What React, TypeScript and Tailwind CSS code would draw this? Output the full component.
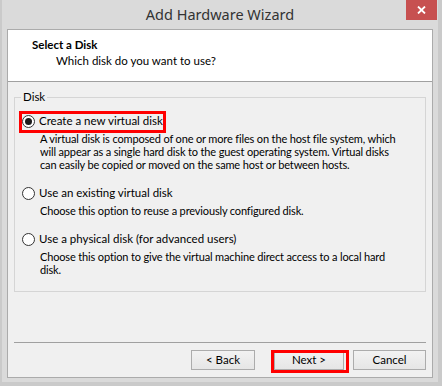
import React from "react";

const font = { fontFamily: 'Lato, "Noto Sans", Arial, sans-serif' };
const titleFont = { fontFamily: '"Noto Sans", Arial, sans-serif' };

function Radio({ checked }: { checked?: boolean }) {
  return (
    <span className="flex h-[13px] w-[13px] shrink-0 items-center justify-center rounded-full border border-[#333333] bg-white">
      {checked && <span className="h-[7px] w-[7px] rounded-full bg-[#1b1b1b]" />}
    </span>
  );
}

function Btn({ children }: { children: React.ReactNode }) {
  return (
    <div className="flex h-[20px] items-center justify-center border border-[#acacac] bg-gradient-to-b from-[#f2f2f2] to-[#e6e6e6] text-[11.5px] text-[#000]">
      {children}
    </div>
  );
}

function Option({ checked, label, lines }: { checked?: boolean; label: string; lines: string[] }) {
  return (
    <div>
      <div className="flex items-center gap-[4px] text-[11.5px] leading-[14px] text-black">
        <Radio checked={checked} />
        <span>{label}</span>
      </div>
      <div className="whitespace-nowrap pl-[18px] pt-[4px] text-[11px] leading-[13px] tracking-[-0.15px] text-black">
        {lines.map((l, i) => (
          <div key={i}>{l}</div>
        ))}
      </div>
    </div>
  );
}

export default function App() {
  return (
    <div className="relative h-[386px] w-[442px] bg-[#cacaca]" style={font}>
      <div className="ml-[2px] flex h-[382px] w-[436px] flex-col bg-[#dadada] px-[5px] pb-[4px]">
        {/* Title bar */}
        <div className="relative flex h-[29px] shrink-0 items-center justify-center">
          <span className="pt-[1px] text-[14.5px] text-[#333333]" style={titleFont}>Add Hardware Wizard</span>
          <div className="absolute right-[-4px] top-0 flex h-[20px] w-[31px] items-center justify-center bg-[#c75050]">
            <svg width="9" height="8" viewBox="0 0 9 8">
              <path d="M1 0.5 L8 7.5 M8 0.5 L1 7.5" stroke="#fff" strokeWidth="1.8" />
            </svg>
          </div>
        </div>
        {/* Client */}
        <div className="flex flex-1 flex-col border border-[#ababab] bg-[#f0f0f0]">
          <div className="h-[52px] shrink-0 border-b border-[#a0a0a0] bg-white pl-[24px] pt-[8px]">
            <div className="text-[11.5px] font-bold leading-[14px] text-black">Select a Disk</div>
            <div className="pl-[24px] pt-[2px] text-[11.5px] leading-[14px] text-black">
              Which disk do you want to use?
            </div>
          </div>
          <div className="flex flex-1 flex-col px-[6px] pt-[15px]">
            <div className="relative flex h-[195px] flex-col gap-[15px] border border-[#d5d5d5] px-[7px] pt-[16px]">
              <span className="absolute left-[6px] top-[-8px] bg-[#f0f0f0] px-[2px] text-[11.5px] leading-[14px] text-black">
                Disk
              </span>
              <Option
                checked
                label="Create a new virtual disk"
                lines={[
                  "A virtual disk is composed of one or more files on the host file system, which",
                  "will appear as a single hard disk to the guest operating system. Virtual disks",
                  "can easily be copied or moved on the same host or between hosts.",
                ]}
              />
              <Option
                label="Use an existing virtual disk"
                lines={["Choose this option to reuse a previously configured disk."]}
              />
              <Option
                label="Use a physical disk (for advanced users)"
                lines={[
                  "Choose this option to give the virtual machine direct access to a local hard",
                  "disk.",
                ]}
              />
            </div>
            <div className="flex-1" />
            <div className="border-t border-[#a0a0a0]" />
            <div className="flex h-[34px] items-center justify-end">
              <div className="w-[64px]"><Btn>&lt; Back</Btn></div>
              <div className="ml-[19px] w-[70px]"><Btn>Next &gt;</Btn></div>
              <div className="ml-[9px] w-[73px]"><Btn>Cancel</Btn></div>
            </div>
          </div>
        </div>
      </div>
      {/* annotation boxes */}
      <div className="absolute left-[19px] top-[111px] h-[22px] w-[147px] border-[3px] border-[#ff0000]" />
      <div className="absolute left-[271px] top-[350px] h-[23px] w-[78px] border-[3px] border-[#ff0000]" />
    </div>
  );
}
